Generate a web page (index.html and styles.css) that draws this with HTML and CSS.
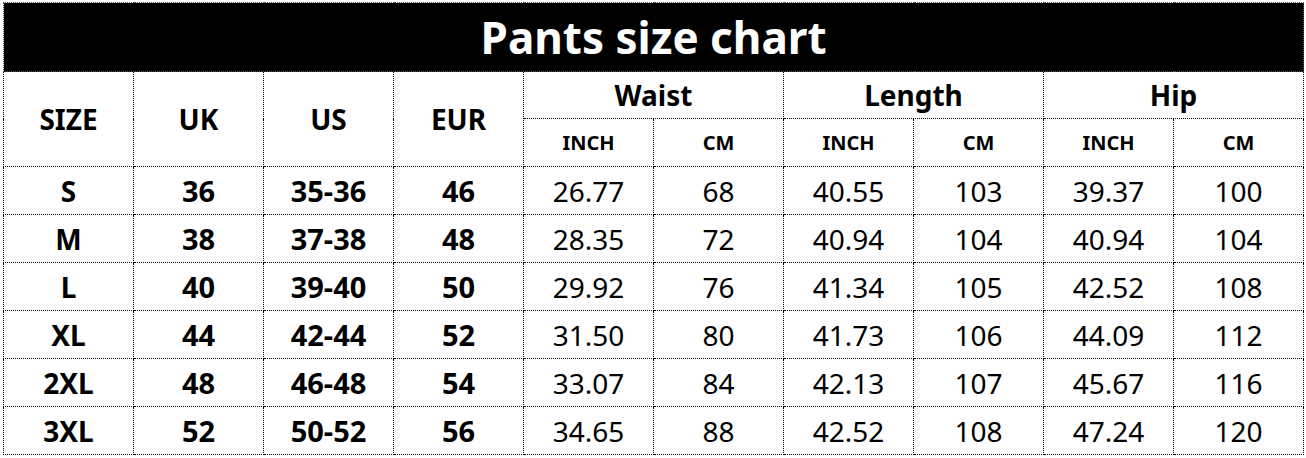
FILE: index.html
```html
<!DOCTYPE html>
<html lang="en">
<head>
<meta charset="utf-8">
<title>Pants size chart</title>
<link rel="stylesheet" href="styles.css">
</head>
<body>
<div class="page">
<table class="chart">
  <colgroup>
    <col class="c"><col class="c"><col class="c"><col class="c"><col class="c">
    <col class="c"><col class="c"><col class="c"><col class="c"><col class="c">
  </colgroup>
  <thead>
    <tr><th class="title" colspan="10">Pants size chart</th></tr>
    <tr class="h1">
      <th rowspan="2">SIZE</th>
      <th rowspan="2">UK</th>
      <th rowspan="2">US</th>
      <th rowspan="2">EUR</th>
      <th colspan="2">Waist</th>
      <th colspan="2">Length</th>
      <th colspan="2">Hip</th>
    </tr>
    <tr class="h2">
      <th class="unit">INCH</th><th class="unit">CM</th>
      <th class="unit">INCH</th><th class="unit">CM</th>
      <th class="unit">INCH</th><th class="unit">CM</th>
    </tr>
  </thead>
  <tbody>
    <tr><th class="sz">S</th><th>36</th><th>35-36</th><th>46</th><td>26.77</td><td>68</td><td>40.55</td><td>103</td><td>39.37</td><td>100</td></tr>
    <tr><th class="sz">M</th><th>38</th><th>37-38</th><th>48</th><td>28.35</td><td>72</td><td>40.94</td><td>104</td><td>40.94</td><td>104</td></tr>
    <tr><th class="sz">L</th><th>40</th><th>39-40</th><th>50</th><td>29.92</td><td>76</td><td>41.34</td><td>105</td><td>42.52</td><td>108</td></tr>
    <tr><th class="sz">XL</th><th>44</th><th>42-44</th><th>52</th><td>31.50</td><td>80</td><td>41.73</td><td>106</td><td>44.09</td><td>112</td></tr>
    <tr><th class="sz">2XL</th><th>48</th><th>46-48</th><th>54</th><td>33.07</td><td>84</td><td>42.13</td><td>107</td><td>45.67</td><td>116</td></tr>
    <tr><th class="sz">3XL</th><th>52</th><th>50-52</th><th>56</th><td>34.65</td><td>88</td><td>42.52</td><td>108</td><td>47.24</td><td>120</td></tr>
  </tbody>
</table>
</div>
</body>
</html>
```
FILE: styles.css
```css
html, body {
  margin: 0;
  padding: 0;
  background: #fff;
}
.page {
  padding: 2px 0 0 3px;
}
.chart {
  border-collapse: collapse;
  table-layout: fixed;
  width: 1301px;
  font-family: "Noto Sans", "Open Sans", sans-serif;
  color: #000;
}
.c {
  width: 130px;
}
.chart th,
.chart td {
  border: 1px dotted #000;
  padding: 0;
  text-align: center;
  vertical-align: middle;
  height: 47px;
  line-height: 1;
}
.chart th {
  font-weight: 700;
  font-size: 28px;
}
.chart tbody th {
  font-size: 29px;
}
.chart tbody th.sz {
  font-size: 28px;
}
.chart td {
  font-weight: 400;
  font-size: 28px;
}
.chart .title {
  background: #000;
  color: #fff;
  font-size: 44px;
  height: 68px;
  border: 1px dotted #555;
}
.chart .h1 th {
  height: 46px;
}
.chart .unit {
  font-size: 20px;
}
```
